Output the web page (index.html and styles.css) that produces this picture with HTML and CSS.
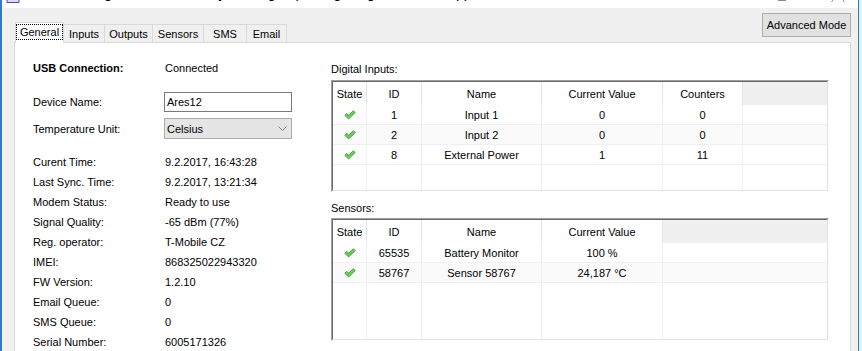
FILE: index.html
```html
<!DOCTYPE html>
<html lang="en">
<head>
    <meta charset="UTF-8">
    <title>Ares12 - Configuration</title>
    <link rel="stylesheet" href="styles.css">
</head>
<body>
    <div class="window">
        <!-- Title bar (only its lower edge is visible) -->
        <div class="titlebar">
            <svg class="app-icon" viewBox="0 0 14 4">
                <path d="M1 0v2.5h12V0" fill="#dcdcf0" stroke="#4b4b96" stroke-width="1"/>
            </svg>
            <span class="title">Ares Configuration - Security Manager (Configuring Mode: Setup)</span>
            <svg class="caption" viewBox="0 0 80 3">
                <path d="M8 0.5h8" stroke="#8a8a8a" stroke-width="1"/>
                <path d="M63 0l-1.5 2M73 0l1.5 2" stroke="#8a8a8a" stroke-width="1"/>
            </svg>
        </div>

        <div class="client">
            <div class="tab-header">
                <ul class="tabs">
                    <li class="tab active"><span class="focus">General</span></li>
                    <li class="tab">Inputs</li>
                    <li class="tab">Outputs</li>
                    <li class="tab">Sensors</li>
                    <li class="tab">SMS</li>
                    <li class="tab">Email</li>
                </ul>
                <button class="btn">Advanced Mode</button>
            </div>

            <div class="tab-page">
                <!-- Device info -->
                <div class="info">
                    <div class="row">
                        <span class="usb">USB Connection:</span>
                        <span>Connected</span>
                    </div>

                    <div class="edit-group">
                        <div class="row">
                            <span>Device Name:</span>
                            <div class="textbox">Ares12</div>
                        </div>
                        <div class="row">
                            <span>Temperature Unit:</span>
                            <div class="combo">
                                <span>Celsius</span>
                                <svg class="chevron" viewBox="0 0 9 5">
                                    <path d="M0.5 0.5l4 4 4-4" fill="none" stroke="#707070" stroke-width="0.9"/>
                                </svg>
                            </div>
                        </div>
                    </div>

                    <div class="status">
                        <div class="row"><span>Curent Time:</span><span>9.2.2017, 16:43:28</span></div>
                        <div class="row"><span>Last Sync. Time:</span><span>9.2.2017, 13:21:34</span></div>
                        <div class="row"><span>Modem Status:</span><span>Ready to use</span></div>
                        <div class="row"><span>Signal Quality:</span><span>-65 dBm (77%)</span></div>
                        <div class="row"><span>Reg. operator:</span><span>T-Mobile CZ</span></div>
                        <div class="row"><span>IMEI:</span><span>868325022943320</span></div>
                        <div class="row"><span>FW Version:</span><span>1.2.10</span></div>
                        <div class="row"><span>Email Queue:</span><span>0</span></div>
                        <div class="row"><span>SMS Queue:</span><span>0</span></div>
                        <div class="row"><span>Serial Number:</span><span>6005171326</span></div>
                    </div>
                </div>

                <!-- List views -->
                <div class="lists">
                    <div class="list-label">Digital Inputs:</div>
                    <div class="list inputs">
                        <table>
                            <colgroup>
                                <col class="c-state"><col class="c-id"><col class="c-name"><col class="c-value"><col class="c-count"><col>
                            </colgroup>
                            <tr>
                                <th>State</th><th>ID</th><th>Name</th><th>Current Value</th><th>Counters</th><th class="fill"></th>
                            </tr>
                            <tr>
                                <td><svg class="ok" viewBox="0 0 12 10"><path d="M0.8 5.2L2.8 3.3 4.6 5.1 9.4 0.7 11.3 2.6 4.6 9.1Z"/></svg></td>
                                <td>1</td><td>Input 1</td><td>0</td><td>0</td><td></td>
                            </tr>
                            <tr class="alt">
                                <td><svg class="ok" viewBox="0 0 12 10"><path d="M0.8 5.2L2.8 3.3 4.6 5.1 9.4 0.7 11.3 2.6 4.6 9.1Z"/></svg></td>
                                <td>2</td><td>Input 2</td><td>0</td><td>0</td><td></td>
                            </tr>
                            <tr>
                                <td><svg class="ok" viewBox="0 0 12 10"><path d="M0.8 5.2L2.8 3.3 4.6 5.1 9.4 0.7 11.3 2.6 4.6 9.1Z"/></svg></td>
                                <td>8</td><td>External Power</td><td>1</td><td>11</td><td></td>
                            </tr>
                            <tr class="rest">
                                <td></td><td></td><td></td><td></td><td></td><td></td>
                            </tr>
                        </table>
                    </div>

                    <div class="list-label sensors-label">Sensors:</div>
                    <div class="list sensors">
                        <table>
                            <colgroup>
                                <col class="c-state"><col class="c-id"><col class="c-name"><col class="c-value"><col>
                            </colgroup>
                            <tr>
                                <th>State</th><th>ID</th><th>Name</th><th>Current Value</th><th class="fill"></th>
                            </tr>
                            <tr>
                                <td><svg class="ok" viewBox="0 0 12 10"><path d="M0.8 5.2L2.8 3.3 4.6 5.1 9.4 0.7 11.3 2.6 4.6 9.1Z"/></svg></td>
                                <td>65535</td><td>Battery Monitor</td><td>100 %</td><td></td>
                            </tr>
                            <tr class="alt">
                                <td><svg class="ok" viewBox="0 0 12 10"><path d="M0.8 5.2L2.8 3.3 4.6 5.1 9.4 0.7 11.3 2.6 4.6 9.1Z"/></svg></td>
                                <td>58767</td><td>Sensor 58767</td><td>24,187 °C</td><td></td>
                            </tr>
                            <tr class="rest">
                                <td></td><td></td><td></td><td></td><td></td>
                            </tr>
                        </table>
                    </div>
                </div>
            </div>
        </div>
    </div>
</body>
</html>
```

FILE: styles.css
```css
/* Base */
* {
    margin: 0;
    padding: 0;
    box-sizing: border-box;
}

body {
    font-family: "Liberation Sans", Arial, sans-serif;
    font-size: 11px;
    color: #000;
    background: #e9eff5;
    width: 862px;
    height: 351px;
    overflow: hidden;
}

/* Window frame */
.window {
    width: 859px;
    height: 351px;
    border-left: 2px solid #2d7bc9;
    border-right: 1px solid #2d7bc9;
    background: #f0f0f0;
    overflow: hidden;
}

.titlebar {
    height: 8px;
    background: #fff;
    display: flex;
    align-items: flex-start;
    overflow: hidden;
}

.app-icon {
    width: 14px;
    height: 4px;
    margin-left: 4px;
    flex-shrink: 0;
}

.title {
    font-size: 15px;
    line-height: 15px;
    margin-top: -15px;
    margin-left: 14px;
    white-space: nowrap;
}

.caption {
    width: 80px;
    height: 3px;
    margin-left: auto;
    margin-right: 8px;
    flex-shrink: 0;
}

/* Client area */
.client {
    padding: 0 7px 0 12px;
}

.tab-header {
    height: 34px;
    display: flex;
    align-items: flex-end;
    justify-content: space-between;
    padding-left: 1px;
}

.tabs {
    display: flex;
    align-items: flex-end;
    list-style: none;
}

.tab {
    height: 18px;
    display: flex;
    align-items: center;
    justify-content: center;
    background: #f0f0f0;
    border: 1px solid #d9d9d9;
    border-left: 0;
    border-bottom: 0;
}

.tab:nth-child(1) { width: 49px; }
.tab:nth-child(2) { width: 41px; }
.tab:nth-child(3) { width: 48px; }
.tab:nth-child(4) { width: 51px; }
.tab:nth-child(5) { width: 43px; }
.tab:nth-child(6) { width: 40px; }

.tab.active {
    height: 21px;
    align-items: flex-start;
    padding-top: 1px;
    background: #fff;
    border-left: 1px solid #d9d9d9;
    margin-bottom: -1px;
    position: relative;
    z-index: 1;
}

.focus {
    height: 16px;
    line-height: 14px;
    padding: 0 3px;
    border: 1px dotted #000;
}

.btn {
    font: inherit;
    color: #000;
    width: 89px;
    height: 24px;
    margin-bottom: 5px;
    background: #e1e1e1;
    border: 1px solid #adadad;
}

.tab-page {
    height: 320px;
    display: flex;
    background: #fff;
    border: 1px solid #d9d9d9;
}

/* Device info column */
.info {
    width: 316px;
    padding: 15px 0 0 18px;
    flex-shrink: 0;
}

.row {
    display: grid;
    grid-template-columns: 132px 1fr;
    align-items: center;
    min-height: 20px;
}

.usb {
    font-weight: bold;
}

.edit-group {
    margin-top: 14px;
}

.edit-group .row + .row {
    margin-top: 6px;
}

.textbox {
    width: 128px;
    height: 20px;
    line-height: 18px;
    margin-left: -1px;
    padding-left: 2px;
    border: 1px solid #7a7a7a;
}

.combo {
    width: 128px;
    height: 21px;
    margin-left: -1px;
    padding: 0 4px 0 2px;
    display: flex;
    align-items: center;
    justify-content: space-between;
    background: #e5e5e5;
    border: 1px solid #adadad;
}

.chevron {
    width: 9px;
    height: 5px;
}

.status {
    margin-top: 13px;
}

/* List views */
.lists {
    width: 498px;
    padding-top: 19px;
}

.list-label {
    height: 14px;
    line-height: 14px;
    margin-bottom: 4px;
}

.sensors-label {
    margin-top: 9px;
    margin-bottom: 3px;
}

.list {
    border: 1px solid;
    border-color: #a0a0a0 #fff #fff #a0a0a0;
}

.list.inputs { height: 112px; }
.list.sensors { height: 123px; }

.list table {
    width: 100%;
    height: 100%;
    table-layout: fixed;
    border-collapse: separate;
    border-spacing: 0;
    border: 1px solid;
    border-color: #696969 #e3e3e3 #e3e3e3 #696969;
}

.c-state { width: 34px; }
.c-id { width: 55px; }
.c-name { width: 120px; }
.c-value { width: 121px; }
.c-count { width: 80px; }

th {
    height: 23px;
    font-weight: normal;
    background: #fff;
    border-right: 1px solid #e5e5e5;
}

th.fill {
    background: #f0f0f0;
    border-right: 0;
}

td {
    height: 20px;
    text-align: center;
    border-right: 1px solid #f0f0f0;
    border-bottom: 1px solid #f0f0f0;
}

td:last-child {
    border-right: 0;
}

tr.alt td {
    background: #fafafa;
}

tr.rest td {
    height: auto;
    border-bottom: 0;
}

.ok {
    width: 12px;
    height: 10px;
    display: block;
    margin: 0 auto;
    fill: #6cc85c;
    stroke: #3f9a3a;
    stroke-width: 0.8;
}
```
